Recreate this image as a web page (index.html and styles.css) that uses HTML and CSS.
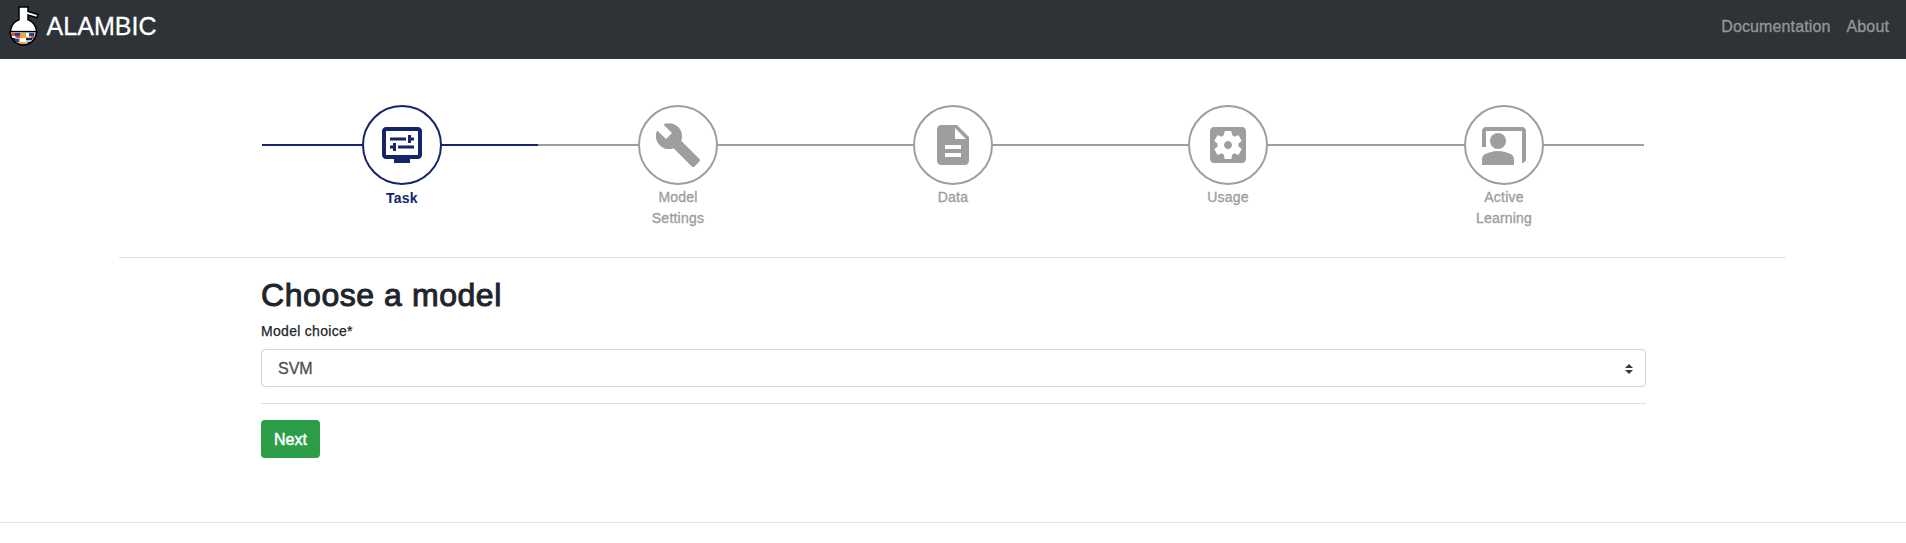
FILE: index.html
```html
<!DOCTYPE html>
<html lang="en">
<head>
<meta charset="utf-8">
<title>ALAMBIC</title>
<link rel="stylesheet" href="styles.css">
</head>
<body>
<nav class="navbar">
  <a class="brand">
    <svg class="logo" viewBox="7 5 32 42" width="32" height="42">
      <path d="M19 7h9v4.500l10 3-1 3.200-9-2.700v4.700A13 13 0 1 1 19 19.700z" fill="#fff" stroke="#000" stroke-width="1.500"/>
      <clipPath id="bowl"><path d="M10 31.500h26a13 13.500 0 0 1-26 0z"/></clipPath>
      <g clip-path="url(#bowl)">
        <path fill="#b9bbc0" d="M9 31h28v16H9z"/>
        <path fill="#2b3f8c" d="M15 33h5v3h-5zM29 33h5v3h-5zM14 39h5v3h-5z"/>
        <path fill="#d9532c" d="M11 33h4v3h-4zM16 36h4v2h-4zM31 36h3v3h-3z"/>
        <path fill="#f2a33a" d="M20 33h6v5h-6zM14 42h5v2h-5zM20 42h5v2h-5z"/>
        <path fill="#fff" d="M20 38h6v4h-6zM26 33h3v4h-3zM11 36h4v2h-4z"/>
        <path fill="#23242b" d="M26 38h6v2h-6zM10 38h5v2h-5zM28 42h4v2h-4z"/>
      </g>
      <path d="M10 31.500h26" stroke="#000" stroke-width="1.300"/>
      <path d="M10 31.500a13 13.200 0 0 0 26.500 0" fill="none" stroke="#000" stroke-width="1.500"/>
    </svg>
    <span>ALAMBIC</span>
  </a>
  <div class="links"><a>Documentation</a><a>About</a></div>
</nav>

<section class="wizard">
  <div class="track"><div class="progress"></div></div>
  <ol class="steps">
    <li class="step active">
      <div class="circle"><svg viewBox="0 0 24 24"><path fill-rule="evenodd" d="M20 3H4c-1.1 0-2 .9-2 2v12c0 1.1.9 2 2 2h4v2h8v-2h4c1.100 0 2-.9 2-2V5c0-1.100-.9-2-2-2zm0 14H4V5h16v12z"/><path d="M6 8.250h8v1.500H6zM16.500 9.750H18v-1.500h-1.500V7H15v4h1.500zM10 12.250h8v1.500h-8zM7.500 15H9v-4H7.500v1.250H6v1.500h1.500z"/></svg></div>
      <span class="label">Task</span>
    </li>
    <li class="step">
      <div class="circle"><svg viewBox="0 0 24 24"><path d="M22.700 19l-9.100-9.100c.9-2.300.4-5-1.500-6.900-2-2-5-2.400-7.400-1.300L9 6 6 9 1.600 4.700C.4 7.100.9 10.100 2.900 12.100c1.900 1.900 4.600 2.400 6.900 1.500l9.100 9.100c.4.4 1 .4 1.400 0l2.300-2.300c.5-.4.5-1.100.1-1.400z"/></svg></div>
      <span class="label">Model Settings</span>
    </li>
    <li class="step">
      <div class="circle"><svg viewBox="0 0 24 24"><path d="M14 2H6c-1.100 0-1.990.9-1.990 2L4 20c0 1.100.89 2 1.990 2H18c1.100 0 2-.9 2-2V8l-6-6zm2 16H8v-2h8v2zm0-4H8v-2h8v2zm-3-5V3.500L18.500 9H13z"/></svg></div>
      <span class="label">Data</span>
    </li>
    <li class="step">
      <div class="circle"><svg viewBox="0 0 24 24"><path d="M12 10c-1.100 0-2 .9-2 2s.9 2 2 2 2-.9 2-2-.9-2-2-2zm7-7H5c-1.110 0-2 .9-2 2v14c0 1.100.89 2 2 2h14c1.110 0 2-.9 2-2V5c0-1.100-.89-2-2-2zm-1.750 9c0 .23-.02.46-.05.68l1.480 1.160c.13.11.17.3.08.45l-1.400 2.420c-.09.15-.27.21-.43.15l-1.740-.7c-.36.28-.76.51-1.180.69l-.26 1.850c-.03.17-.18.3-.35.3h-2.800c-.17 0-.32-.13-.35-.29l-.26-1.850c-.43-.18-.82-.41-1.180-.69l-1.740.7c-.16.06-.34 0-.43-.15l-1.400-2.420c-.09-.15-.05-.34.08-.45l1.480-1.160c-.03-.23-.05-.46-.05-.69 0-.23.02-.46.05-.68l-1.480-1.160c-.13-.11-.17-.3-.08-.45l1.400-2.420c.09-.15.27-.21.43-.15l1.740.7c.36-.28.76-.51 1.180-.69l.26-1.850c.03-.17.18-.3.35-.3h2.800c.17 0 .32.13.35.29l.26 1.850c.43.18.82.41 1.180.69l1.740-.7c.16-.06.34 0 .43.15l1.400 2.420c.09.15.05.34-.08.45l-1.480 1.160c.03.23.05.46.05.69z"/></svg></div>
      <span class="label">Usage</span>
    </li>
    <li class="step">
      <div class="circle"><svg viewBox="0 0 24 24"><path d="M21 3H3c-1.100 0-2 .9-2 2v8h2V5h18v16c1.100 0 2-.9 2-2V5c0-1.100-.9-2-2-2z"/><circle cx="9" cy="10" r="4"/><path d="M15.390 16.560C13.710 15.700 11.530 15 9 15s-4.710.7-6.390 1.560C1.610 17.070 1 18.100 1 19.220V22h16v-2.780c0-1.120-.61-2.150-1.610-2.660z"/></svg></div>
      <span class="label">Active Learning</span>
    </li>
  </ol>
</section>

<main class="form">
  <h2>Choose a model</h2>
  <label class="field-label">Model choice*</label>
  <div class="select">
    <span>SVM</span>
    <svg viewBox="0 0 4 5" width="8" height="10"><path fill="#343a40" d="M2 0L0 2h4zm0 5L0 3h4z"/></svg>
  </div>
  <div class="actions"><button class="next">Next</button></div>
</main>
<footer class="footer"></footer>
</body>
</html>
```

FILE: styles.css
```css
* { box-sizing: border-box; }
body {
  margin: 0;
  background: #fff;
  color: #212529;
  font: 16px/24px "Liberation Sans", Arial, sans-serif;
}
.navbar {
  height: 59px;
  padding: 0 17px 7px 7px;
  display: flex;
  justify-content: space-between;
  align-items: center;
  background: #2e3338;
}
.brand {
  display: flex;
  align-items: center;
  gap: 7.500px;
  color: #fff;
  font-size: 25px;
  letter-spacing: .05px;
  -webkit-text-stroke: .3px;
}
.logo { display: block; -webkit-text-stroke: 0; }
.links {
  display: flex;
  gap: 16px;
  padding-top: 2px;
  color: #949799;
  letter-spacing: .13px;
  -webkit-text-stroke: .3px;
}
.wizard {
  width: 1667px;
  height: 199px;
  margin: 0 119px;
  padding: 46px 142px 0 143px;
  border-bottom: 1px solid #dfe0e1;
}
.track {
  height: 2px;
  margin-top: 39px;
  background: #9e9e9e;
}
.progress { width: 20%; height: 100%; background: #16246b; }
.steps {
  display: grid;
  grid-template-columns: 276px 276px 274px 276px 276px;
  margin: -41px 2px 0;
  padding: 0;
  list-style: none;
}
.step {
  display: flex;
  flex-direction: column;
  align-items: center;
  color: #9e9e9e;
}
.active { color: #16246b; }
.circle {
  width: 80px;
  height: 80px;
  display: grid;
  place-items: center;
  border: 2px solid currentColor;
  border-radius: 50%;
  background: #fff;
}
.circle svg { width: 48px; height: 48px; fill: currentColor; }
.label {
  width: 70px;
  margin-top: 2px;
  font-size: 14px;
  line-height: 21px;
  letter-spacing: .22px;
  text-align: center;
  -webkit-text-stroke: .35px;
}
.active .label { font-weight: 700; margin-top: 3px; -webkit-text-stroke: 0; }
.form {
  width: 1385px;
  margin: 0 auto 0 261px;
  padding-top: 18px;
}
h2 {
  margin: 0 0 7px;
  font-size: 32px;
  line-height: 38px;
  font-weight: 400;
  letter-spacing: .56px;
  -webkit-text-stroke: 1px;
}
.field-label {
  display: block;
  margin-bottom: 8px;
  font-size: 14px;
  line-height: 20px;
  letter-spacing: .3px;
  -webkit-text-stroke: .25px;
}
.select {
  height: 38px;
  padding: 1px 12px 0 16px;
  display: flex;
  align-items: center;
  justify-content: space-between;
  border: 1px solid #ced4da;
  border-radius: 4px;
  color: #495057;
  -webkit-text-stroke: .3px;
}
.actions {
  margin-top: 16px;
  padding-top: 16px;
  border-top: 1px solid #dfe0e1;
}
.next {
  display: block;
  width: 59px;
  height: 38px;
  padding: 2px 0 0;
  border: 0;
  border-radius: 4px;
  background: #2b9e47;
  color: #fff;
  font: 16px/24px "Liberation Sans", Arial, sans-serif;
  -webkit-text-stroke: .5px;
}
.footer { margin-top: 64px; border-top: 1px solid #dfe0e1; }
```
